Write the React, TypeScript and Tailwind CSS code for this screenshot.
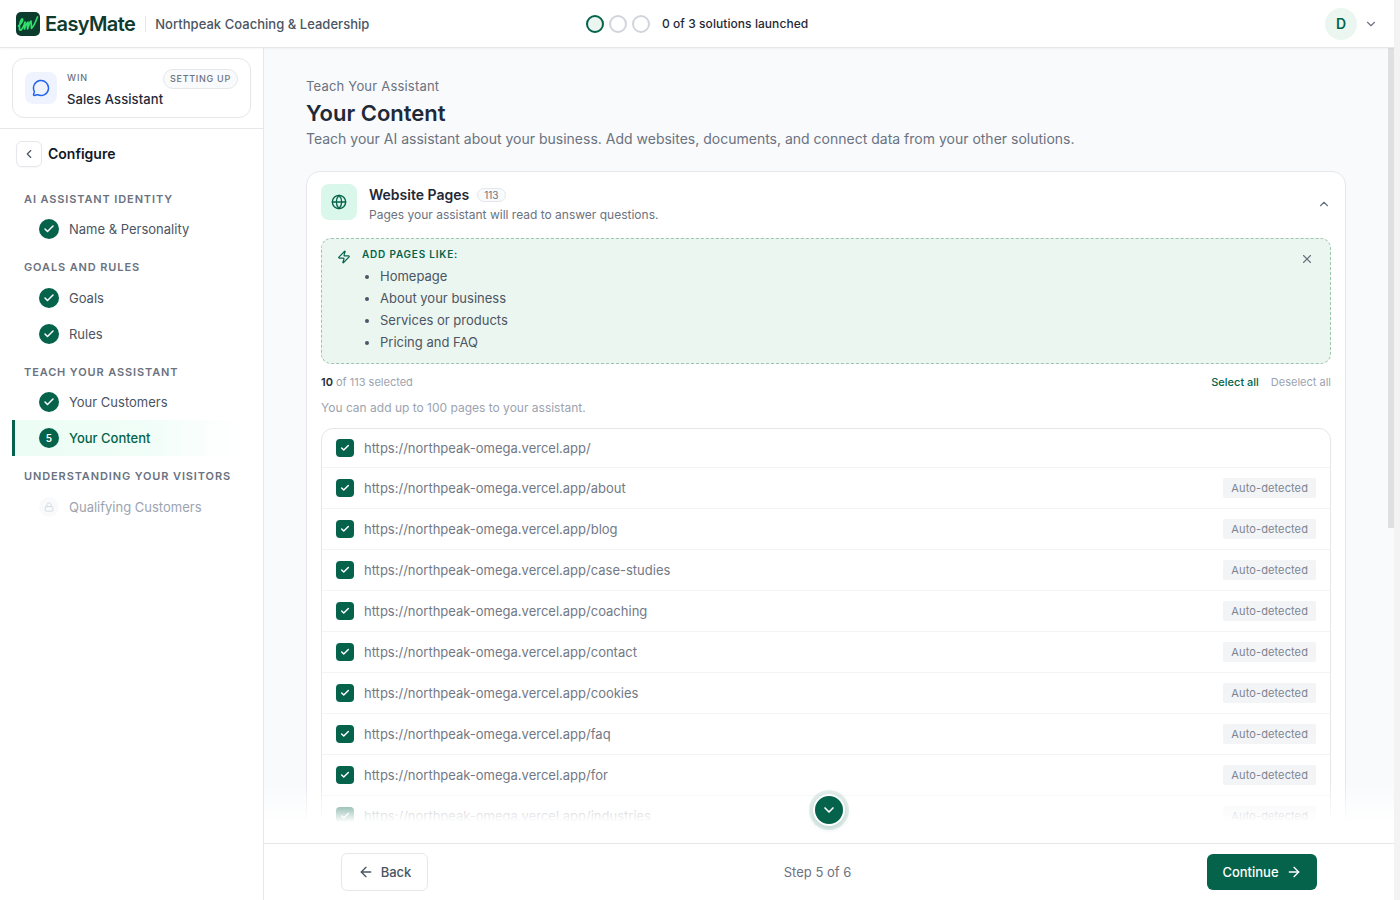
import React from "react";
import { ArrowLeft, ArrowRight, Check, ChevronDown, ChevronLeft, ChevronUp, Globe, Lock, MessageCircle, X, Zap } from "lucide-react";

const urls = ["about", "blog", "case-studies", "coaching", "contact", "cookies", "faq", "for", "industries"];

function Label({ children }: { children: React.ReactNode }) {
  return <div className="pl-[24px] text-[11px] leading-[16px] font-semibold tracking-[0.08em] text-[#6b7280] uppercase">{children}</div>;
}

function Done({ children }: { children: React.ReactNode }) {
  return (
    <div className="h-[36px] pl-[39px] flex items-center gap-[10px] text-[13px] text-[#4b5563]">
      <span className="w-[20px] h-[20px] rounded-full bg-[#04634a] flex items-center justify-center">
        <Check size={12} strokeWidth={3} className="text-white" />
      </span>
      <span className="mt-[2px]">{children}</span>
    </div>
  );
}

function Box() {
  return (
    <span className="w-[18px] h-[18px] rounded-[4px] bg-[#04634a] flex items-center justify-center shrink-0">
      <Check size={10} strokeWidth={3.5} className="text-white" />
    </span>
  );
}

function Row({ path, auto }: { path: string; auto?: boolean }) {
  return (
    <div className="h-[41px] px-[14px] flex items-center gap-[10px] border-t border-[#f3f4f6]">
      <Box />
      <span className="mt-[2px] text-[13px] text-[#727986]">https://northpeak-omega.vercel.app/{path}</span>
      {auto && <span className="ml-auto h-[20px] px-[8px] bg-[#f3f4f6] rounded-[2px] text-[11px] leading-[20px] text-[#7c8493] tracking-[0.01em]">Auto-detected</span>}
    </div>
  );
}

export default function App() {
  return (
    <div className="h-[900px] flex overflow-hidden bg-white font-['Inter',sans-serif]">
      <div className="flex-1 min-w-0 flex flex-col">
        <header className="relative z-20 h-[48px] shrink-0 flex items-center bg-white border-b border-[#e5e7eb] shadow-[0_1px_2px_rgba(0,0,0,0.04)] pl-[16px] pr-[16px]">
          <div className="flex items-center w-[570px]">
            <svg width="24" height="24" viewBox="0 0 24 24" className="shrink-0">
              <rect width="24" height="24" rx="5" fill="#0b3b2c" />
              <path d="M2.5 14 C5 12 7.5 8 6.5 7 C5 6.5 3 13 3.5 17 C4 20 6.5 17 8 13 L9 10 L8.5 17 C10 13 11 10 12 10 L11.5 17 C13 13 14 9 15 9 L15.5 16.5 C18 14 20 9 21.5 5" fill="none" stroke="#2fe06b" strokeWidth="1.7" strokeLinecap="round" strokeLinejoin="round" />
            </svg>
            <span className="ml-[5px] text-[20px] leading-[24px] font-semibold tracking-[-0.03em] text-[#0f3b2e]">EasyMate</span>
            <span className="ml-[10px] mr-[9px] h-[16px] w-px bg-[#e5e7eb]" />
            <span className="mt-[2px] text-[13px] font-medium tracking-[0.03px] text-[#4b5563]">Northpeak Coaching &amp; Leadership</span>
          </div>
          <div className="flex items-center">
            <span className="w-[18px] h-[18px] rounded-full border-2 border-[#04634a] bg-[#ecf6f0]" />
            <span className="ml-[5px] w-[18px] h-[18px] rounded-full border-2 border-[#d1d5db]" />
            <span className="ml-[5px] w-[18px] h-[18px] rounded-full border-2 border-[#d1d5db]" />
            <span className="ml-[12px] text-[12px] font-medium tracking-[0.06px] text-[#1f2937]">0 of 3 solutions launched</span>
          </div>
          <div className="ml-auto flex items-center gap-[7px]">
            <span className="w-[32px] h-[32px] rounded-full bg-[#ecf6f0] flex items-center justify-center text-[14px] font-semibold text-[#04634a]">D</span>
            <ChevronDown size={14} className="text-[#6b7280]" />
          </div>
        </header>

        <div className="flex-1 min-h-0 flex">
          <aside className="w-[264px] shrink-0 bg-white border-r border-[#e5e7eb] flex flex-col">
            <div className="h-[81px] px-[12px] pt-[10px] border-b border-[#e5e7eb]">
              <div className="relative h-[60px] rounded-[12px] border border-[#e5e7eb] flex items-center pl-[12px] gap-[10px]">
                <span className="w-[32px] h-[32px] rounded-[8px] bg-[#eff3fe] flex items-center justify-center">
                  <MessageCircle size={18} className="text-[#2563eb]" />
                </span>
                <div className="mt-[2px]">
                  <div className="text-[9px] leading-[14px] font-medium tracking-[0.1em] text-[#6b7280]">WIN</div>
                  <div className="mt-[5px] text-[13px] leading-[18px] font-medium tracking-[0.1px] text-[#1f2937]">Sales Assistant</div>
                </div>
                <span className="absolute right-[12px] top-[10px] h-[20px] px-[6px] rounded-full border border-[#e5e7eb] bg-[#f9fafb] text-[9px] leading-[18px] font-medium tracking-[0.08em] text-[#6b7280]">SETTING UP</span>
              </div>
            </div>
            <div className="h-[25px] mt-[12px] pl-[16px] flex items-center gap-[6px] text-[14px] font-semibold text-[#111827]">
              <span className="w-[26px] h-[26px] rounded-[6px] border border-[#e5e7eb] flex items-center justify-center shadow-[0_1px_2px_rgba(0,0,0,0.04)]">
                <ChevronLeft size={14} className="text-[#4b5563]" />
              </span>
              Configure
            </div>
            <div className="mt-[25px]"><Label>AI ASSISTANT IDENTITY</Label></div>
            <div className="mt-[4px]"><Done>Name &amp; Personality</Done></div>
            <div className="mt-[12px]"><Label>GOALS AND RULES</Label></div>
            <div className="mt-[5px]"><Done>Goals</Done></div>
            <Done>Rules</Done>
            <div className="mt-[12px]"><Label>TEACH YOUR ASSISTANT</Label></div>
            <div className="mt-[4px]"><Done>Your Customers</Done></div>
            <div className="ml-[12px] mr-[24px] h-[36px] pl-[24px] border-l-[3px] border-[#04634a] bg-gradient-to-r from-[#ecfdf5] via-[#f1fdf8] via-60% to-white flex items-center gap-[10px] text-[13px] font-medium text-[#04634a]">
              <span className="w-[20px] h-[20px] rounded-full bg-[#04634a] flex items-center justify-center text-[10px] font-semibold text-white">5</span>
              <span className="mt-[2px]">Your Content</span>
            </div>
            <div className="mt-[12px]"><Label>UNDERSTANDING YOUR VISITORS</Label></div>
            <div className="mt-[5px] h-[36px] pl-[39px] flex items-center gap-[10px] text-[13px] text-[#9ca3af]">
              <span className="w-[20px] h-[20px] rounded-full bg-[#f9fafb] flex items-center justify-center">
                <Lock size={10} className="text-[#d1d5db]" />
              </span>
              <span className="mt-[2px]">Qualifying Customers</span>
            </div>
          </aside>

          <div className="flex-1 min-w-0 flex flex-col">
            <main className="relative flex-1 min-h-0 flex bg-[#f8fafc]">
              <div className="flex-1 min-w-0 overflow-hidden px-[42px] pt-[28px]">
                <div className="text-[13px] leading-[20px] tracking-[0.2px] text-[#6b7280]">Teach Your Assistant</div>
                <h1 className="mt-[3px] text-[22px] leading-[28px] font-semibold text-[#1f2937]">Your Content</h1>
                <p className="mt-[2px] text-[14px] leading-[20px] text-[#6b7280]">Teach your AI assistant about your business. Add websites, documents, and connect data from your other solutions.</p>
                <section className="mt-[22px] rounded-[14px] border border-[#e5e7eb] bg-white px-[14px] pt-[12px] pb-[20px]">
                  <div className="flex items-start">
                    <span className="w-[36px] h-[36px] rounded-[8px] bg-[#d9f7ea] flex items-center justify-center">
                      <Globe size={16} className="text-[#04634a]" />
                    </span>
                    <div className="ml-[12px] mt-[1px]">
                      <div className="flex items-center gap-[8px]">
                        <span className="text-[14px] leading-[20px] font-semibold text-[#1f2937]">Website Pages</span>
                        <span className="h-[14px] px-[6px] rounded-full border border-[#e5e7eb] bg-[#f9fafb] text-[10px] leading-[12px] text-[#6b7280]">113</span>
                      </div>
                      <div className="mt-[1px] text-[12px] leading-[18px] text-[#6b7280]">Pages your assistant will read to answer questions.</div>
                    </div>
                    <ChevronUp size={14} className="ml-auto mt-[13px] text-[#6b7280]" />
                  </div>
                  <div className="relative mt-[14px] h-[126px] rounded-[10px] border border-dashed border-[#9ec4b2] bg-[#ecf6f0] pl-[15px] pt-[8px] flex">
                    <Zap size={14} className="mt-[3px] text-[#04634a]" />
                    <div className="ml-[11px]">
                      <div className="text-[10px] leading-[14px] font-semibold tracking-[0.08em] text-[#04634a]">ADD PAGES LIKE:</div>
                      <ul className="mt-[4px] list-disc pl-[18px] text-[13px] leading-[22px] text-[#4b5563]">
                        <li>Homepage</li>
                        <li>About your business</li>
                        <li>Services or products</li>
                        <li>Pricing and FAQ</li>
                      </ul>
                    </div>
                    <X size={14} className="absolute right-[16px] top-[13px] text-[#6b7280]" />
                  </div>
                  <div className="mt-[10px] flex items-center text-[11px] leading-[16px] text-[#9ca3af]">
                    <span><b className="font-semibold text-[#1f2937]">10</b> of 113 selected</span>
                    <span className="ml-auto font-medium text-[#04634a]">Select all</span>
                    <span className="ml-[12px]">Deselect all</span>
                  </div>
                  <div className="mt-[9px] text-[12px] leading-[18px] text-[#9ca3af]">You can add up to 100 pages to your assistant.</div>
                  <div className="mt-[11px] rounded-[12px] border border-[#e5e7eb]">
                    <div className="h-[38px] px-[14px] flex items-center gap-[10px]">
                      <Box />
                      <span className="mt-[2px] text-[13px] text-[#727986]">https://northpeak-omega.vercel.app/</span>
                    </div>
                    {urls.map((u) => <Row key={u} path={u} auto />)}
                  </div>
                </section>
              </div>
              <div className="w-[6px] shrink-0 h-[480px] bg-[#e0e0e0]" />
              <div className="absolute left-0 right-0 bottom-0 h-[60px] bg-gradient-to-b from-white/0 to-white to-[65%] pointer-events-none" />
              <button className="absolute left-[calc(50%-16px)] bottom-[17px] w-[32px] h-[32px] rounded-full bg-[#04634a] border-2 border-white shadow-[0_0_0_4px_rgba(4,99,74,0.1),0_2px_6px_rgba(4,99,74,0.2)] flex items-center justify-center">
                <ChevronDown size={16} strokeWidth={2.5} className="text-white" />
              </button>
            </main>
            <footer className="h-[57px] shrink-0 border-t border-[#e5e7eb] bg-white">
              <div className="w-[976px] h-full mx-auto flex items-center justify-between">
                <button className="w-[87px] h-[38px] rounded-[6px] border border-[#e5e7eb] bg-white flex items-center justify-center gap-[7px] text-[13px] font-medium text-[#4b5563]">
                  <ArrowLeft size={16} />
                  <span className="mt-[2px]">Back</span>
                </button>
                <span className="mt-[2px] text-[13px] text-[#6b7280]">Step 5 of 6</span>
                <button className="w-[110px] h-[36px] rounded-[6px] bg-[#04634a] flex items-center justify-center gap-[7px] text-[13px] font-medium text-white">
                  <span className="mt-[2px]">Continue</span>
                  <ArrowRight size={16} />
                </button>
              </div>
            </footer>
          </div>
        </div>
      </div>
      <div className="w-[6px] shrink-0 bg-[#f3f3f3]" />
    </div>
  );
}
